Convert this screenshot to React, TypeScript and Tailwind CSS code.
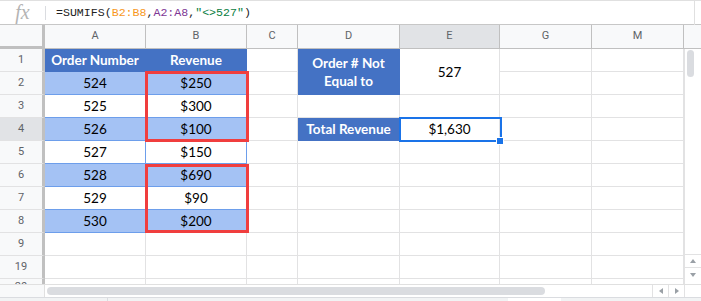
import React from "react";

type Cell = {
  text?: string;
  kind?: "hdr" | "band" | "plain" | "tbl";
  span?: boolean;
};

const cols = ["A", "B", "C", "D", "E", "G", "M"];

// one entry per row: row label + cells (D/E of row 2 are covered by the merge)
const rows: { label: string; cells: Cell[]; sel?: boolean }[] = [
  {
    label: "1",
    cells: [
      { text: "Order Number", kind: "hdr" },
      { text: "Revenue", kind: "hdr" },
      {},
      { text: "Order # Not Equal to", kind: "hdr", span: true },
      { text: "527", kind: "plain", span: true },
      {},
      {},
    ],
  },
  { label: "2", cells: [{ text: "524", kind: "band" }, { text: "$250", kind: "band" }, {}, {}, {}] },
  { label: "3", cells: [{ text: "525", kind: "tbl" }, { text: "$300", kind: "tbl" }, {}, {}, {}, {}, {}] },
  {
    label: "4",
    sel: true,
    cells: [
      { text: "526", kind: "band" },
      { text: "$100", kind: "band" },
      {},
      { text: "Total Revenue", kind: "hdr" },
      { text: "$1,630", kind: "plain" },
      {},
      {},
    ],
  },
  { label: "5", cells: [{ text: "527", kind: "tbl" }, { text: "$150", kind: "tbl" }, {}, {}, {}, {}, {}] },
  { label: "6", cells: [{ text: "528", kind: "band" }, { text: "$690", kind: "band" }, {}, {}, {}, {}, {}] },
  { label: "7", cells: [{ text: "529", kind: "tbl" }, { text: "$90", kind: "tbl" }, {}, {}, {}, {}, {}] },
  { label: "8", cells: [{ text: "530", kind: "band" }, { text: "$200", kind: "band" }, {}, {}, {}, {}, {}] },
  { label: "9", cells: [{}, {}, {}, {}, {}, {}, {}] },
  { label: "19", cells: [{}, {}, {}, {}, {}, {}, {}] },
];

const cellClass = (c: Cell) => {
  if (c.kind === "hdr")
    return "bg-[#4472c4] text-white font-bold border-[#4472c4]";
  if (c.kind === "band") return "bg-[#a4c2f4] text-black border-[#6d9eeb]";
  if (c.kind === "tbl") return "bg-white text-black border-[#6d9eeb]";
  if (c.kind === "plain") return "bg-white text-black border-[#e2e2e3]";
  return "bg-white border-[#e2e2e3]";
};

export default function App() {
  return (
    <div className="w-[701px] h-[301px] bg-white overflow-hidden flex flex-col" style={{ fontFamily: "Lato, sans-serif" }}>
      {/* formula bar */}
      <div className="h-[25px] shrink-0 flex items-center border-t border-[#e0e0e0] border-b border-b-[#c7c7c7] relative">
        <div className="w-[45px] h-full flex items-center justify-center">
          <span className="text-[#b4b4b4] italic text-[20px] leading-none -mt-[2px]" style={{ fontFamily: '"Liberation Serif", serif' }}>
            fx
          </span>
        </div>
        <div className="w-px h-[14px] bg-[#dadce0]" />
        <div className="pl-[10px] text-[11.6px] text-[#222] whitespace-pre" style={{ fontFamily: '"Liberation Mono", monospace' }}>
          =SUMIFS(<span className="text-[#f7981d]">B2:B8</span>,<span className="text-[#7e3794]">A2:A8</span>,<span className="text-[#0b8043]">"&lt;&gt;527"</span>)
        </div>
        <div className="absolute right-[6px] -top-px h-[25px] w-px bg-[#e0e0e0]" />
      </div>

      {/* sheet grid */}
      <div className="relative grid grid-cols-[45px_101px_101px_51px_102px_100px_92px_92px_17px] grid-rows-[24px_repeat(10,23px)_5px] shrink-0">
        {/* corner */}
        <div className="bg-[#f8f9fa] border-r-[3px] border-b-[3px] border-[#c0c0c0]" />
        {cols.map((c) => (
          <div
            key={c}
            className={`flex items-center justify-center text-[11px] text-[#5f6368] border-r border-b border-[#c0c0c0] ${
              c === "E" ? "bg-[#e1e3e6]" : "bg-[#f8f9fa]"
            }`}
            style={{ fontFamily: "Roboto, sans-serif" }}
          >
            {c}
          </div>
        ))}
        <div className="bg-[#f8f9fa] border-b border-[#c0c0c0]" />

        {/* vertical scrollbar */}
        <div className="col-start-9 row-start-2 row-end-13 bg-white border-l border-[#e2e2e3] flex flex-col">
          <div className="ml-[2px] mt-px w-[7px] h-[27px] rounded-full bg-[#dadce0]" />
          <div className="mt-auto mb-[3px] border-t border-[#e2e2e3]">
            <div className="h-[13px] flex items-center justify-center border-b border-[#e2e2e3]">
              <div className="w-0 h-0 border-l-[3px] border-r-[3px] border-b-[4px] border-l-transparent border-r-transparent border-b-[#9aa0a6]" />
            </div>
            <div className="h-[13px] flex items-center justify-center">
              <div className="w-0 h-0 border-l-[3px] border-r-[3px] border-t-[4px] border-l-transparent border-r-transparent border-t-[#9aa0a6]" />
            </div>
          </div>
        </div>

        {rows.map((r) => (
          <React.Fragment key={r.label}>
            <div
              className={`flex items-center justify-center text-[11px] text-[#5f6368] border-r-[3px] border-b border-r-[#c0c0c0] border-b-[#e2e2e3] ${
                r.sel ? "bg-[#e1e3e6]" : "bg-[#f8f9fa]"
              }`}
              style={{ fontFamily: "Roboto, sans-serif" }}
            >
              {r.label}
            </div>
            {r.cells.map((c, i) => (
              <div
                key={i}
                className={`flex items-center justify-center text-center text-[13.5px] leading-[16px] border-r border-b ${cellClass(c)} ${
                  c.span ? "row-span-2" : ""
                }`}
              >
                {c.text === "Order # Not Equal to" ? (
                  <span className="leading-[18px]">
                    Order # Not
                    <br />
                    Equal to
                  </span>
                ) : (
                  c.text
                )}
              </div>
            ))}
          </React.Fragment>
        ))}

        {/* partially visible row 20 */}
        <div className="bg-[#f8f9fa] border-r-[3px] border-r-[#c0c0c0] overflow-hidden">
          <div className="text-[11px] text-[#5f6368] text-center leading-[11px] mt-[2px]" style={{ fontFamily: "Roboto, sans-serif" }}>
            20
          </div>
        </div>
        {cols.map((c) => (
          <div key={c} className="bg-white border-r border-[#e2e2e3]" />
        ))}

        {/* red highlight boxes */}
        <div className="absolute left-[145px] top-[46px] w-[104px] h-[71px] border-[3px] border-[#f03e3e] pointer-events-none" />
        <div className="absolute left-[145px] top-[139px] w-[104px] h-[69px] border-[3px] border-[#f03e3e] pointer-events-none" />

        {/* selected cell E4 */}
        <div className="absolute left-[399px] top-[92px] w-[103px] h-[25px] border-2 border-[#1a73e8] pointer-events-none" />
        <div className="absolute left-[497px] top-[113px] w-[6px] h-[6px] bg-[#1a73e8] border border-white box-content -translate-x-px -translate-y-px" />
      </div>

      {/* horizontal scrollbar */}
      <div className="h-[13px] shrink-0 flex border-t border-[#e0e0e0] bg-white">
        <div className="w-[45px] bg-[#f8f9fa] border-r border-[#e0e0e0]" />
        <div className="w-[607px] flex items-center">
          <div className="ml-[2px] w-[498px] h-[8px] rounded-full bg-[#dadce0]" />
        </div>
        <div className="w-[16px] flex items-center justify-center border-l border-[#e2e2e3]">
          <div className="w-0 h-0 border-t-[3px] border-b-[3px] border-r-[4px] border-t-transparent border-b-transparent border-r-[#9aa0a6]" />
        </div>
        <div className="w-[16px] flex items-center justify-center border-l border-[#e2e2e3]">
          <div className="w-0 h-0 border-t-[3px] border-b-[3px] border-l-[4px] border-t-transparent border-b-transparent border-l-[#9aa0a6]" />
        </div>
        <div className="flex-1 border-l border-[#e2e2e3]" />
      </div>

      {/* sheet tab strip */}
      <div className="flex-1 flex bg-[#f1f3f4] border-t border-[#dadce0]">
        <div className="w-[108px] border-r border-[#dadce0]" />
        <div className="w-[400px]" />
        <div className="w-[53px] bg-white" />
      </div>
    </div>
  );
}
